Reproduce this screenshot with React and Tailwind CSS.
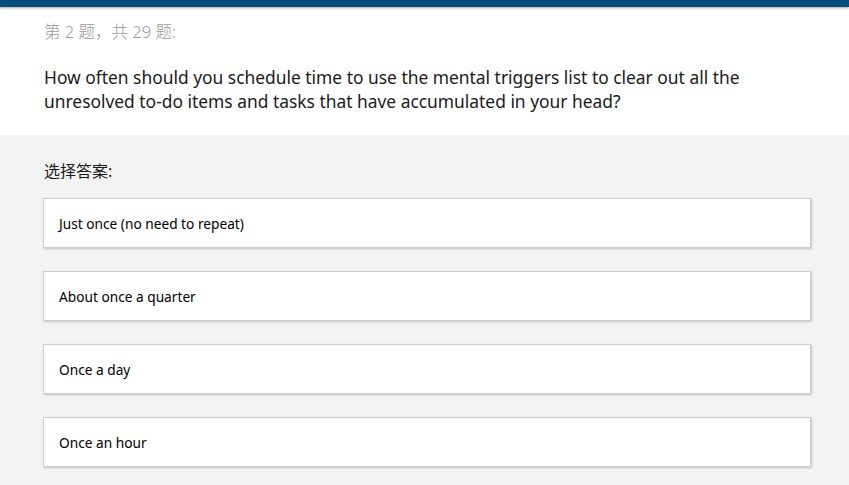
const options = [
  "Just once (no need to repeat)",
  "About once a quarter",
  "Once a day",
  "Once an hour",
];

export default function App() {
  return (
    <div className="w-[849px] h-[485px] overflow-hidden bg-[#f3f3f3] font-['Noto_Sans','Noto_Sans_CJK_SC',sans-serif]">
      {/* top bar */}
      <div className="h-[7px] bg-[#054b7d] shadow-[0_1px_3px_rgba(0,0,0,0.35)] relative z-10"></div>

      {/* question header */}
      <div className="bg-white px-[44px] pt-[14px] h-[128px]">
        <div className="text-[16.5px] leading-[22px] font-light text-[#999999]">第 2 题，共 29 题:</div>
        <div className="mt-[22px] text-[17.4px] leading-[24px] text-[#1a1a1a] w-[720px]">
          How often should you schedule time to use the mental triggers list to clear out all the
          unresolved to-do items and tasks that have accumulated in your head?
        </div>
      </div>

      {/* answers */}
      <div className="px-[43px] pt-[25px]">
        <div className="pl-px text-[16px] leading-[22px] text-[#1a1a1a]">选择答案:</div>
        <div className="mt-[16px] flex flex-col gap-[23px] w-[768px]">
          {options.map((o) => (
            <div
              key={o}
              className="h-[50px] bg-white border border-[#cccccc] shadow-[1px_1px_2px_rgba(0,0,0,0.2)] flex items-center pt-[2px] px-[15px] text-[13.7px] text-black"
            >
              {o}
            </div>
          ))}
        </div>
      </div>
    </div>
  );
}
